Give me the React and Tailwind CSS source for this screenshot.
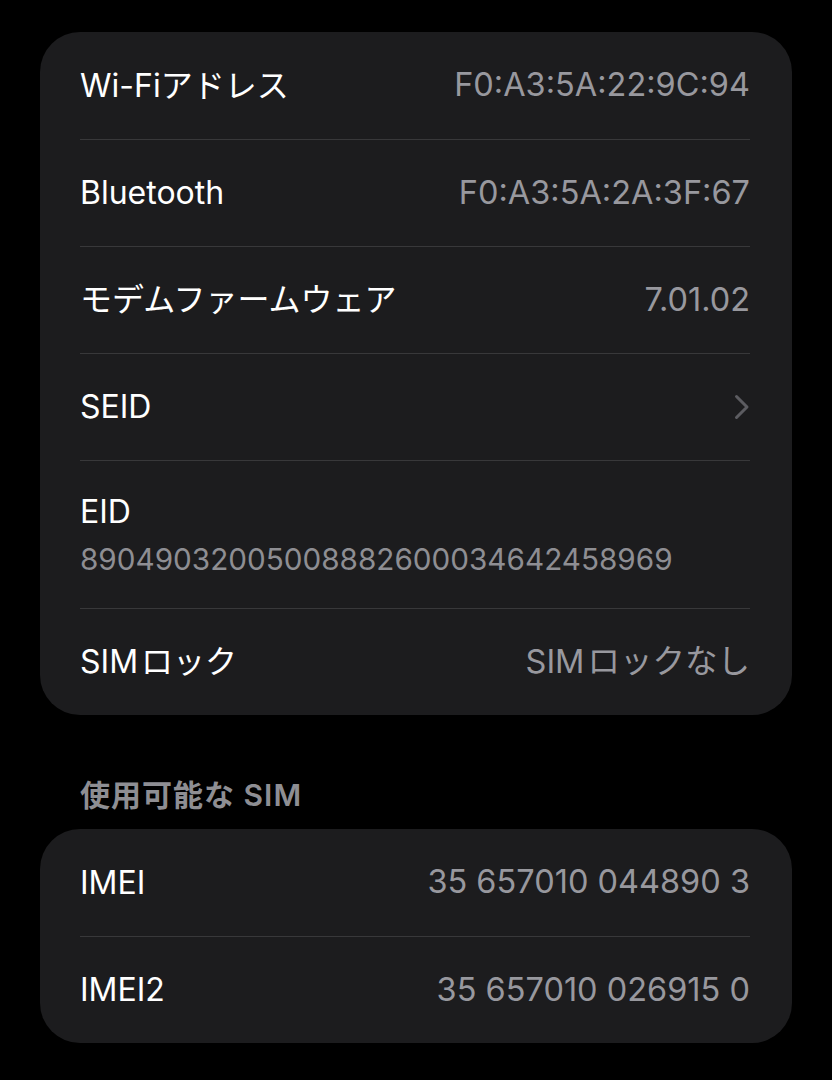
const font = { fontFamily: 'Inter, "Noto Sans CJK JP", sans-serif' }

function Chevron() {
  return (
    <svg width="16" height="26" viewBox="0 0 16 26" fill="none" stroke="#5c5c61" strokeWidth="3" strokeLinecap="round" strokeLinejoin="round">
      <polyline points="2.5,2.5 13,13 2.5,23.5" />
    </svg>
  )
}

function Row({ label, value, chevron, first }) {
  return (
    <div className="pl-[40px] pr-[42px]">
      <div className={`flex items-center justify-between h-[107px] ${first ? '' : 'border-t border-[#38383a]'}`}>
        <span className="text-[32px] text-white">{label}</span>
        {chevron ? (
          <Chevron />
        ) : (
          <span className="text-[32.5px] text-[#98989e]">{value}</span>
        )}
      </div>
    </div>
  )
}

export default function App() {
  return (
    <div className="min-h-[1080px] bg-black pt-[32px] px-[40px]" style={font}>
      {/* Device info */}
      <section className="rounded-[40px] bg-[#1c1c1e] overflow-hidden">
        <Row first label="Wi-Fiアドレス" value="F0:A3:5A:22:9C:94" />
        <Row label="Bluetooth" value="F0:A3:5A:2A:3F:67" />
        <Row label="モデムファームウェア" value="7.01.02" />
        <Row label="SEID" chevron />
        <div className="pl-[40px] pr-[42px]">
          <div className="h-[148px] border-t border-[#38383a] flex flex-col justify-center">
            <span className="text-[32px] text-white leading-[42px]">EID</span>
            <span className="text-[29.7px] text-[#8e8e93] leading-[40px] mt-[6px]">89049032005008882600034642458969</span>
          </div>
        </div>
        <Row label={<>SIM<span className="ml-[3px]">ロック</span></>} value={<>SIM<span className="ml-[3px]">ロックなし</span></>} />
      </section>

      {/* Available SIM */}
      <h2 className="mt-[62px] mb-[16px] pl-[40px] text-[30px] font-semibold text-[#8e8e93] leading-[36px] tracking-[1px]">使用可能な SIM</h2>
      <section className="rounded-[40px] bg-[#1c1c1e] overflow-hidden">
        <Row first label="IMEI" value="35 657010 044890 3" />
        <Row label="IMEI2" value="35 657010 026915 0" />
      </section>
    </div>
  )
}
